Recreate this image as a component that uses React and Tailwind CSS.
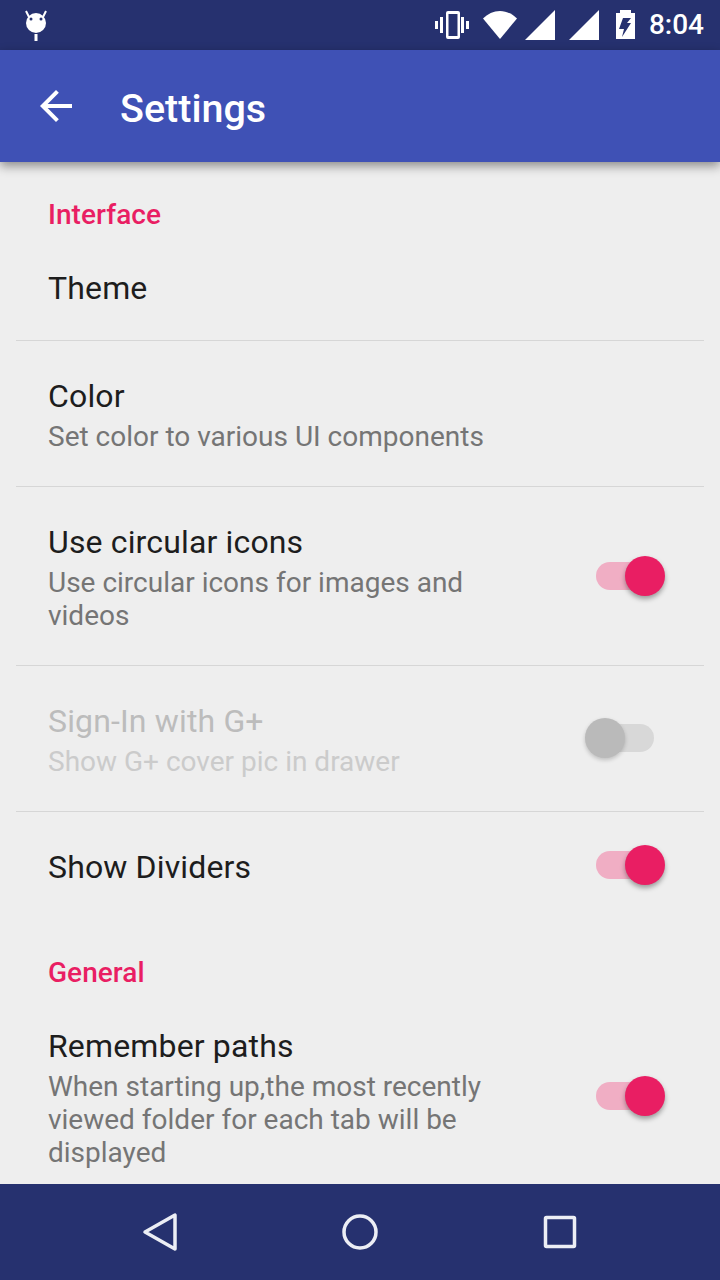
const Toggle = ({ on }) => (
  <div className="relative mb-[2px] h-[28px] w-[58px] shrink-0">
    <div className={`h-full w-full rounded-full ${on ? 'bg-[#f0aec4]' : 'bg-[#d8d8d8]'}`} />
    {on ? (
      <div className="absolute left-[29px] top-[-6px] h-[40px] w-[40px] rounded-full bg-[#e91e63] shadow-[0_3px_5px_rgba(0,0,0,0.35)]" />
    ) : (
      <div className="absolute left-[-11px] top-[-6px] h-[40px] w-[40px] rounded-full bg-[#bababa] shadow-[0_2px_4px_rgba(0,0,0,0.2)]" />
    )}
  </div>
);

const Category = ({ children, className }) => (
  <div className={`px-[48px] text-[28px] font-medium leading-[34px] tracking-[0.05px] text-[#e91e63] ${className}`}>{children}</div>
);

const Row = ({ title, summary, toggle, disabled, divider = true, className, textClassName = '' }) => (
  <div className={`relative flex items-center justify-between pl-[48px] pr-[66px] ${className}`}>
    <div className={`w-[470px] ${textClassName}`}>
      <div className={`text-[32px] leading-[38px] tracking-[0.15px] ${disabled ? 'text-[#bcbcbc]' : 'text-[#1d1d1d]'}`}>{title}</div>
      {summary && (
        <div className={`mt-[5px] text-[28px] leading-[33px] ${disabled ? 'text-[#cbcbcb]' : 'text-[#757575]'}`}>{summary}</div>
      )}
    </div>
    {toggle !== undefined && <Toggle on={toggle} />}
    {divider && <div className="absolute bottom-0 left-[16px] right-[16px] h-px bg-[#d6d6d6]" />}
  </div>
);

const StatusBar = () => (
  <div className="flex h-[50px] shrink-0 items-center justify-between bg-[#26316f] pl-[24px] pr-[16px] text-white">
    {/* debug notification icon */}
    <svg width="24" height="32" viewBox="0 0 24 32" fill="white">
      <circle cx="12" cy="14" r="10" />
      <path d="M5 8 L2 2 M19 8 L22 2" stroke="white" strokeWidth="2" />
      <circle cx="7" cy="10" r="1.5" fill="#26316f" />
      <circle cx="17" cy="10" r="1.5" fill="#26316f" />
      <rect x="10.5" y="25" width="3" height="7" />
    </svg>
    <div className="flex items-center">
      <svg width="34" height="28" viewBox="0 0 34 28" fill="white">
        <path d="M0 10h3v8H0zM5 6h3v16H5zM26 6h3v16h-3zM31 10h3v8h-3z" />
        <path fillRule="evenodd" d="M11 2a2 2 0 0 1 2-2h10a2 2 0 0 1 2 2v24a2 2 0 0 1-2 2H13a2 2 0 0 1-2-2zM13.5 3v22h9V3z" />
      </svg>
      <svg className="ml-[14px]" width="34" height="28" viewBox="0 0 34 28" fill="white">
        <path d="M17 28 L0 7.5 C4.5 3 10.5 0 17 0 S29.5 3 34 7.5 Z" />
      </svg>
      <svg className="ml-[8px]" width="30" height="30" viewBox="0 0 30 30" fill="white">
        <path d="M0 30 L30 0 V30 Z" />
      </svg>
      <svg className="ml-[14px]" width="30" height="30" viewBox="0 0 30 30" fill="white">
        <path d="M0 30 L30 0 V30 Z" />
      </svg>
      <svg className="ml-[17px]" width="19" height="30" viewBox="0 0 19 30" fill="white">
        <path fillRule="evenodd" d="M4 0h11v3h4v26H0V3h4zM15 8 L7 8 L3 19 H8 L6 27 L15 13 H11 Z" />
      </svg>
      <span className="ml-[14px] text-[28px] font-medium leading-none">8:04</span>
    </div>
  </div>
);

const NavBar = () => (
  <div className="flex h-[96px] shrink-0 items-center justify-center bg-[#26316f]">
    <div className="grid w-[600px] grid-cols-3">
      <div className="flex justify-center">
        <svg width="40" height="40" viewBox="0 0 40 40" fill="none" stroke="#eceef5" strokeWidth="3.5" strokeLinejoin="round">
          <path d="M5 20 L35 3 V37 Z" />
        </svg>
      </div>
      <div className="flex justify-center">
        <svg width="40" height="40" viewBox="0 0 40 40" fill="none" stroke="#eceef5" strokeWidth="3.5">
          <circle cx="20" cy="20" r="16" />
        </svg>
      </div>
      <div className="flex justify-center">
        <svg width="40" height="40" viewBox="0 0 40 40" fill="none" stroke="#eceef5" strokeWidth="3.5" strokeLinejoin="round">
          <rect x="5.5" y="5.5" width="29" height="29" rx="1" />
        </svg>
      </div>
    </div>
  </div>
);

export default function App() {
  return (
    <div className="flex h-[1280px] w-[720px] flex-col overflow-hidden bg-[#eeeeee] font-['Roboto',sans-serif]">
      <StatusBar />

      {/* Toolbar */}
      <div className="relative z-10 flex h-[112px] shrink-0 items-center bg-[#3f51b5] pl-[32px] shadow-[0_4px_10px_rgba(0,0,0,0.42)]">
        <svg width="48" height="48" viewBox="0 0 24 24" fill="white">
          <path d="M20 11H7.83l5.59-5.59L12 4l-8 8 8 8 1.41-1.41L7.83 13H20v-2z" />
        </svg>
        <span className="ml-[40px] mt-[6px] text-[39.5px] font-medium leading-none text-white">Settings</span>
      </div>

      <div className="min-h-0 flex-1 overflow-hidden">
        <Category className="pt-[36px]">Interface</Category>
        <Row title="Theme" className="h-[109px] pt-[3px]" />
        <Row title="Color" summary="Set color to various UI components" className="h-[146px] pt-[1px]" />
        <Row title="Use circular icons" summary="Use circular icons for images and videos" toggle={true} className="h-[179px]" textClassName="pt-[1px]" />
        <Row title="Sign-In with G+" summary="Show G+ cover pic in drawer" toggle={false} disabled className="h-[146px]" textClassName="pt-[2px]" />
        <Row title="Show Dividers" toggle={true} divider={false} className="h-[108px]" textClassName="pt-[2px]" />
        <Category className="pt-[36px]">General</Category>
        <Row title="Remember paths" summary="When starting up,the most recently viewed folder for each tab will be displayed" toggle={true} divider={false} className="h-[214px]" textClassName="pt-[2px]" />
      </div>

      <NavBar />
    </div>
  );
}
